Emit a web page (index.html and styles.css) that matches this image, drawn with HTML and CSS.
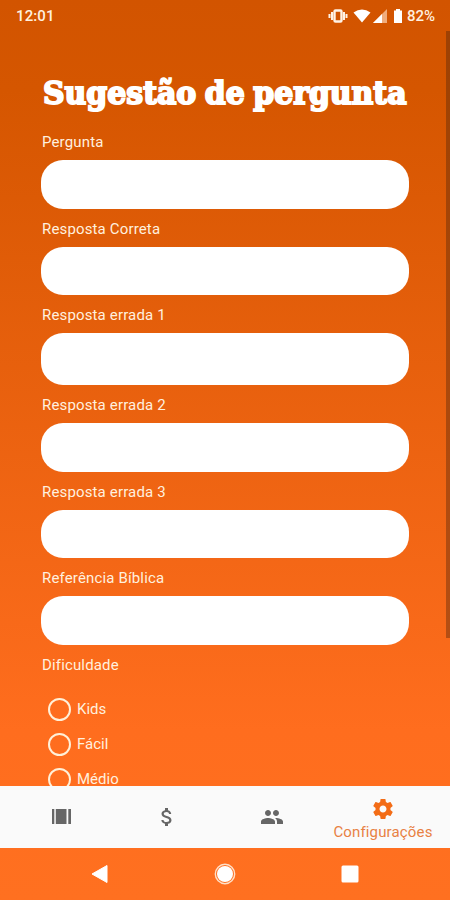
FILE: index.html
```html
<!DOCTYPE html>
<html lang="pt-BR">
<head>
<meta charset="utf-8">
<meta name="viewport" content="width=device-width, initial-scale=1">
<title>Sugestão de pergunta</title>
<link rel="stylesheet" href="styles.css">
</head>
<body>
<div class="screen">
  <header class="status">
    <span class="time">12:01</span>
    <div class="indicators">
      <svg class="vibrate" viewBox="0 0 20 14"><path d="M1.500 5v4M4 3v8M16 3v8M18.500 5v4" stroke="#fff2e5" stroke-width="2"/><rect x="6.500" y="1.500" width="7" height="11" rx="1" fill="none" stroke="#fff2e5" stroke-width="2.400"/></svg>
      <svg class="wifi" viewBox="0 0 18 14"><path d="M.5 3.500Q9-2.500 17.500 3.500L9 13.500z" fill="#fff"/></svg>
      <svg class="signal" viewBox="0 0 14 14"><path d="M14 0v14H0z" fill="#f0ad7d"/><path d="M9 5v9H0z" fill="#fff"/></svg>
      <svg class="battery" viewBox="0 0 10 14"><path d="M3 0h4v1.500h2V14H1V1.500h2z" fill="#fff"/></svg>
      <span class="percent">82%</span>
    </div>
  </header>
  <main class="content">
    <h1 class="title"><span>Sugestão de pergunta</span></h1>
    <form class="form">
      <label class="field"><span>Pergunta</span><input type="text"></label>
      <label class="field"><span>Resposta Correta</span><input type="text"></label>
      <label class="field tall"><span>Resposta errada 1</span><input type="text"></label>
      <label class="field"><span>Resposta errada 2</span><input type="text"></label>
      <label class="field"><span>Resposta errada 3</span><input type="text"></label>
      <label class="field"><span>Referência Bíblica</span><input type="text"></label>
      <div class="group-label">Dificuldade</div>
      <div class="options">
        <label class="option"><i class="radio"></i>Kids</label>
        <label class="option"><i class="radio"></i>Fácil</label>
        <label class="option"><i class="radio"></i>Médio</label>
      </div>
    </form>
    <div class="scrollbar"></div>
  </main>
  <nav class="tabs">
    <a class="tab first"><svg class="cards" viewBox="0 0 19 15"><path d="M0 0h2.300v15H0zM3.800 0h10.700v15H3.800zM16.300 0H19v15h-2.700z"/></svg></a>
    <a class="tab"><svg class="icon" viewBox="0 0 24 24"><path d="M11.800 10.900c-2.270-.59-3-1.200-3-2.150 0-1.090 1.010-1.850 2.700-1.850 1.780 0 2.440.85 2.500 2.100h2.210c-.07-1.720-1.120-3.300-3.210-3.810V3h-3v2.160c-1.940.42-3.500 1.680-3.500 3.610 0 2.310 1.910 3.460 4.700 4.130 2.500.6 3 1.480 3 2.410 0 .69-.49 1.790-2.700 1.790-2.060 0-2.870-.92-2.980-2.100h-2.200c.12 2.190 1.760 3.420 3.680 3.830V21h3v-2.150c1.950-.37 3.500-1.500 3.500-3.550 0-2.840-2.430-3.810-4.700-4.400z"/></svg></a>
    <a class="tab"><svg class="icon people" viewBox="0 0 24 24"><path d="M16 11c1.660 0 2.990-1.340 2.990-3S17.660 5 16 5s-3 1.340-3 3 1.340 3 3 3zm-8 0c1.660 0 2.990-1.340 2.990-3S9.660 5 8 5 5 6.340 5 8s1.340 3 3 3zm0 2c-2.330 0-7 1.170-7 3.500V19h14v-2.500c0-2.330-4.670-3.500-7-3.500zm8 0c-.29 0-.62.020-.97.050 1.160.84 1.970 1.970 1.970 3.450V19h6v-2.500c0-2.330-4.670-3.500-7-3.500z"/></svg></a>
    <a class="tab active"><svg class="icon gear" viewBox="0 0 24 24"><path d="M19.430 12.980c.04-.32.070-.64.070-.98s-.03-.66-.07-.98l2.110-1.650c.19-.15.240-.42.120-.64l-2-3.460c-.12-.22-.39-.3-.61-.22l-2.490 1c-.52-.4-1.080-.73-1.690-.98l-.38-2.650C14.460 2.180 14.250 2 14 2h-4c-.25 0-.46.180-.49.420l-.38 2.650c-.61.250-1.170.590-1.690.980l-2.490-1c-.23-.09-.49 0-.61.220l-2 3.460c-.13.220-.07.490.120.640l2.110 1.650c-.04.320-.07.650-.07.980s.03.660.070.980l-2.110 1.650c-.19.150-.24.420-.12.640l2 3.460c.12.220.39.300.61.220l2.490-1c.52.400 1.080.730 1.690.980l.38 2.650c.03.240.24.420.49.420h4c.25 0 .46-.18.490-.42l.38-2.650c.61-.25 1.170-.59 1.690-.98l2.490 1c.23.090.49 0 .61-.22l2-3.460c.12-.22.070-.49-.12-.64l-2.110-1.650zM12 15.500c-1.930 0-3.500-1.570-3.500-3.500s1.570-3.500 3.500-3.500 3.500 1.570 3.500 3.500-1.570 3.500-3.500 3.500z"/></svg><span>Configurações</span></a>
  </nav>
  <footer class="system">
    <svg viewBox="0 0 22 22"><path d="M18 2.500v17L3 11z" fill="#fff" stroke="#fff" stroke-linejoin="round"/></svg>
    <svg viewBox="0 0 22 22"><circle cx="11" cy="11" r="9.700" fill="none" stroke="#ffe0c8" stroke-width="1.400"/><circle cx="11" cy="11" r="8" fill="#fff"/></svg>
    <svg viewBox="0 0 22 22"><rect x="2.500" y="2.500" width="17" height="17" rx="1.500" fill="#fff"/></svg>
  </footer>
</div>
</body>
</html>
```
FILE: styles.css
```css
* { box-sizing: border-box; }
body { margin: 0; font-family: Roboto, sans-serif; color: #fff0df; }
.screen {
  width: 450px;
  height: 900px;
  display: flex;
  flex-direction: column;
  overflow: hidden;
  background: linear-gradient(#d25400 0, #d55600 90px, #ff6d1e 730px, #ff7020 100%);
}
.status {
  height: 31px;
  flex: none;
  display: flex;
  justify-content: space-between;
  align-items: center;
  padding: 1px 15px 0 16px;
  font-size: 15px;
  font-weight: 500;
}
.time { letter-spacing: .1px; }
.indicators { display: flex; align-items: center; }
.indicators svg { height: 14px; }
.vibrate { width: 20px; margin-right: 5px; }
.wifi { width: 18px; margin-right: 2px; }
.signal { width: 14px; margin-right: 6px; }
.battery { width: 10px; margin-right: 4px; }
.percent { font-size: 15px; }
.content {
  position: relative;
  height: 755px;
  flex: none;
  overflow: hidden;
  padding: 41px 41px 0;
}
.title {
  margin: 0;
  height: 44px;
  padding-left: 2px;
  font: bold 31px/43px "DejaVu Serif", serif;
  color: #fff;
  white-space: nowrap;
}
.title span {
  display: inline-block;
  transform: scaleX(.965);
  transform-origin: left;
  word-spacing: -2px;
  -webkit-text-stroke: 2px #fff;
}
.form { padding-top: 6.500px; font-size: 15px; }
.field { display: block; height: 86.700px; }
.field span, .group-label { display: block; height: 37.500px; padding: 10.600px 0 0 1px; line-height: 18px; letter-spacing: .15px; }
.field input {
  display: block;
  width: 368px;
  height: 48.700px;
  border: 0;
  border-radius: 22px;
  background: #fff;
  outline: 0;
}
.tall { height: 89.500px; }
.tall input { height: 52px; }
.options { padding: 9px 0 0 7px; }
.option { display: flex; align-items: center; height: 35px; gap: 6px; }
.radio { width: 23px; height: 23px; border: 2.500px solid #fff0d8; border-radius: 50%; }
.scrollbar {
  position: absolute;
  top: 0;
  right: 0;
  width: 4px;
  height: 607px;
  background: rgba(70, 35, 10, .38);
}
.tabs {
  height: 62px;
  flex: none;
  display: grid;
  grid-template-columns: 114px 105px 105px 118px;
  background: #fafafa;
}
.tab { display: flex; flex-direction: column; align-items: center; justify-content: center; fill: #666; }
.first { padding: 0 0 1px 9px; }
.cards { width: 19px; height: 15px; }
.icon { width: 24px; height: 24px; }
.active { fill: #f36c16; color: #e88144; font-size: 15px; line-height: 18px; }
.gear { margin-top: 3px; }
.active span { margin-top: 2px; letter-spacing: .15px; }
.system { flex: 1; display: flex; justify-content: center; align-items: center; gap: 103px; }
.system svg { width: 22px; height: 22px; }
```
